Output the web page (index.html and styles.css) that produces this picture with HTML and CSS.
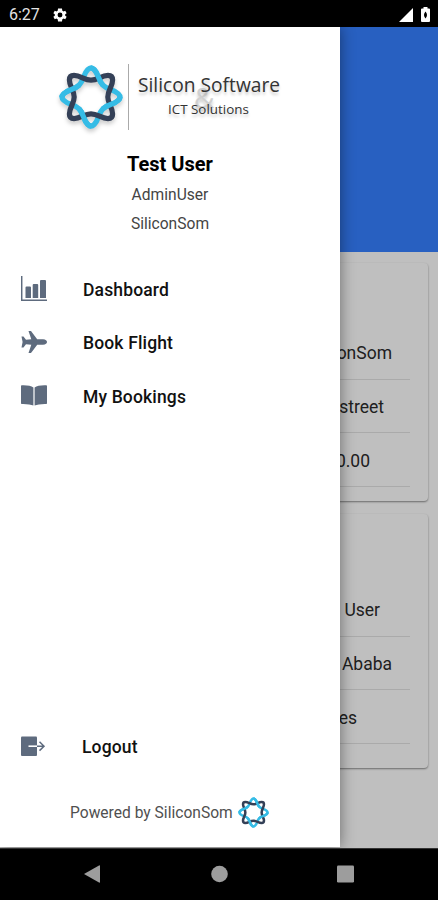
FILE: index.html
```html
<!DOCTYPE html>
<html lang="en">
<head>
<meta charset="utf-8">
<title>Menu</title>
<link rel="stylesheet" href="styles.css">
</head>
<body>
<svg class="defs" aria-hidden="true">
  <defs>
    <path id="loop" d="M0-16.800C7-16.800 10-21.600 17-21.600Q21.600-21.600 21.600-17C21.600-10 16.800-7 16.800 0C16.800 7 21.600 10 21.600 17Q21.600 21.600 17 21.600C10 21.600 7 16.800 0 16.800C-7 16.800-10 21.600-17 21.600Q-21.600 21.600-21.600 17C-21.600 10-16.800 7-16.800 0C-16.800-7-21.600-10-21.600-17Q-21.600-21.600-17-21.600C-10-21.600-7-16.800 0-16.800Z" fill="none" stroke-width="5.200"/>
    <clipPath id="over"><path d="M0 0L0-40L40-40ZM0 0L40 0L40 40ZM0 0L0 40L-40 40ZM0 0L-40 0L-40-40Z"/></clipPath>
    <symbol id="knot" viewBox="-32 -32 64 64">
      <use href="#loop" stroke="#35bce6" transform="rotate(45)"/>
      <use href="#loop" stroke="#344057"/>
      <g clip-path="url(#over)"><use href="#loop" stroke="#35bce6" transform="rotate(45)"/></g>
    </symbol>
  </defs>
</svg>
<div class="phone">
  <header class="status">
    <span class="clock">6:27</span>
    <svg class="gear" viewBox="2 2 20 20"><path fill="#fff" fill-rule="evenodd" d="M19.4 13a7.700 7.700 0 0 0 0-2l2.100-1.600-2-3.500-2.500 1a7.500 7.500 0 0 0-1.700-1L14.800 2.800h-5.600L8.700 5.900a7.500 7.500 0 0 0-1.700 1l-2.500-1-2 3.500L4.600 11a7.700 7.700 0 0 0 0 2l-2.100 1.600 2 3.500 2.500-1a7.500 7.500 0 0 0 1.700 1l.5 3.100h5.600l.5-3.100a7.500 7.500 0 0 0 1.700-1l2.500 1 2-3.500zM12 15.500a3.500 3.500 0 1 1 0-7 3.500 3.500 0 0 1 0 7z"/></svg>
    <svg class="signal" viewBox="0 0 14 14"><path fill="#fff" d="M0 14L14 0V14Z"/></svg>
    <svg class="battery" viewBox="0 0 9 15"><path fill="#fff" fill-rule="evenodd" d="M2.500 0h4v1.500H8q1 0 1 1V14q0 1-1 1H1q-1 0-1-1V2.500q0-1 1-1h1.500ZM4.500 4.500Q1.500 8 4.500 11.500Q7.500 8 4.500 4.500Z"/></svg>
  </header>
  <main class="screen">
    <div class="banner"></div>
    <section class="card first">
      <div class="row"><span class="r1">onSom</span></div>
      <div class="row"><span class="r2">street</span></div>
      <div class="row"><span class="r3">0.00</span></div>
    </section>
    <section class="card">
      <div class="row"><span class="r4">User</span></div>
      <div class="row"><span class="r1">Ababa</span></div>
      <div class="row"><span class="r5">es</span></div>
    </section>
    <aside class="drawer">
      <div class="brand">
        <svg class="logo"><use href="#knot"/></svg>
        <div class="words"><span class="amp">&amp;</span><div class="name">Silicon Software</div><div class="sub">ICT Solutions</div></div>
      </div>
      <div class="user"><h1>Test User</h1><p>AdminUser</p><p>SiliconSom</p></div>
      <nav>
        <a class="item"><svg viewBox="0 0 26 26"><path d="M.7 0V24.300H26" fill="none" stroke="#5e6b7e" stroke-width="1.500"/><path fill="#5e6b7e" d="M4.500 11.500q0-1 1-1h3.500q1 0 1 1V22H4.500ZM11.700 9q0-1 1-1h3.500q1 0 1 1v13h-5.500ZM19 5q0-1 1-1H24q1 0 1 1v17h-6Z"/></svg><span>Dashboard</span></a>
        <a class="item"><svg viewBox="0 0 26 26"><path fill="#5e6b7e" d="M7.500 2H10L16.200 10.200H22Q26 10.700 26 13Q26 15.300 22 15.800H16.200L10 24H7.500L10.300 15.700L5 15.200L2.500 18.500H.5L1.600 13L.5 7.500H2.500L5 10.800L10.300 10.300Z"/></svg><span>Book Flight</span></a>
        <a class="item"><svg viewBox="0 0 26 26"><path fill="#5e6b7e" d="M0 3Q0 2.300.8 2.300Q9 2 12.400 4.500V22.500Q8.500 20.700.7 20.900Q0 20.900 0 20.200ZM26 3Q26 2.300 25.200 2.300Q17 2 13.600 4.500V22.500Q17.500 20.700 25.300 20.900Q26 20.900 26 20.200Z"/></svg><span>My Bookings</span></a>
      </nav>
      <a class="item logout"><svg viewBox="0 0 26 26"><path fill="#5e6b7e" d="M1 3.500H15Q16 3.500 16 4.500V22Q16 23 15 23H1Q0 23 0 22V4.500Q0 3.500 1 3.500Z"/><path d="M7.500 13.200H16" stroke="#fff" stroke-width="1.600"/><path d="M16 13.200H22.500M18.500 8.800L23 13.200L18.500 17.600" fill="none" stroke="#5e6b7e" stroke-width="1.500"/></svg><span>Logout</span></a>
      <footer class="powered"><span>Powered by SiliconSom</span><svg><use href="#knot"/></svg></footer>
    </aside>
  </main>
  <footer class="keys">
    <svg viewBox="0 0 17 18"><path fill="#9d9d9d" d="M0 9L15 .5Q16 0 16 1V17Q16 18 15 17.500Z"/></svg>
    <svg viewBox="0 0 17 18"><circle cx="8.500" cy="9" r="8.300" fill="#9d9d9d"/></svg>
    <svg viewBox="0 0 17 18"><rect y=".5" width="17" height="17" rx="1.200" fill="#9d9d9d"/></svg>
  </footer>
</div>
</body>
</html>
```
FILE: styles.css
```css
* { box-sizing: border-box; }
body { margin: 0; font-family: Roboto, sans-serif; background: #000; }
.defs { position: absolute; width: 0; height: 0; }
.phone { width: 438px; height: 900px; display: flex; flex-direction: column; overflow: hidden; }
.status { height: 27px; background: #000; display: flex; align-items: center; padding: 2px 8px 0 9px; color: #e4e4e4; }
.clock { width: 44px; font-size: 16px; }
.gear { width: 14px; height: 14px; }
.signal { width: 14px; height: 14px; margin-left: auto; margin-right: 8px; }
.battery { width: 9px; height: 15px; }
.screen { position: relative; height: 821px; background: #bfbfbf; overflow: hidden; }
.banner { height: 225px; background: #2860c1; }
.card { width: 418px; height: 254px; margin: 13px 10px 0 10px; padding: 69px 18px 0; border-radius: 4px; box-shadow: 0 1px 2px rgba(0,0,0,.45); }
.card.first { height: 238px; margin-top: 11px; padding-top: 63px; }
.row { height: 53.700px; border-bottom: 1px solid #aaa; display: flex; align-items: center; justify-content: flex-end; padding-top: 2px; font-size: 17.500px; color: #202020; }
.r1 { padding-right: 18px; }
.r2 { padding-right: 26px; }
.r3 { padding-right: 40px; }
.r4 { padding-right: 30px; }
.r5 { padding-right: 53px; }
.drawer { position: absolute; left: 0; top: 0; width: 340px; height: 820px; background: #fff; box-shadow: 0 0 14px rgba(0,0,0,.45); display: flex; flex-direction: column; }
.brand { height: 125px; padding: 37px 0 0 59px; display: flex; }
.logo { width: 64px; height: 66px; filter: drop-shadow(0 3px 2px rgba(0,0,0,.2)); }
.words { position: relative; height: 66px; margin-left: 5px; border-left: 1px solid #aaa; padding: 10px 0 0 9px; font-family: "Open Sans", sans-serif; color: #333; text-shadow: 0 3px 3px rgba(0,0,0,.2); white-space: nowrap; }
.name { font-size: 19.200px; line-height: 22px; }
.sub { font-size: 13.400px; line-height: 16px; margin: 5px 0 0 30px; }
.amp { position: absolute; left: 65px; top: 17px; font-size: 28px; line-height: 32px; color: #d0d0d0; }
.name, .sub { position: relative; }
.user { height: 123px; text-align: center; color: #444; }
.user h1 { margin: 0; font-size: 20px; line-height: 24px; font-weight: 700; color: #000; }
.user p { margin: 0; font-size: 15.600px; line-height: 29px; position: relative; top: 5px; }
.item { height: 53.500px; display: flex; align-items: flex-start; padding: 0 0 0 21px; color: #111; font-size: 17.500px; letter-spacing: .15px; line-height: 30px; font-weight: 500; }
.item svg { width: 26px; height: 26px; margin: 1px 36px 0 0; }
.item:nth-child(2) { height: 54px; margin-top: -.5px; }
.logout { margin-top: auto; height: 51px; }
.logout svg { margin-right: 35px; }
.powered { display: flex; align-items: center; height: 64px; padding: 0 0 5px 70px; font-size: 15.600px; color: #505050; }
.powered svg { width: 31px; height: 31px; margin-left: 5px; }
.keys { height: 52px; background: #000; display: flex; justify-content: space-between; align-items: center; padding: 0 84px; border-top: 1px solid #333; }
.keys svg { width: 17px; height: 18px; position: relative; top: -1px; }
```
